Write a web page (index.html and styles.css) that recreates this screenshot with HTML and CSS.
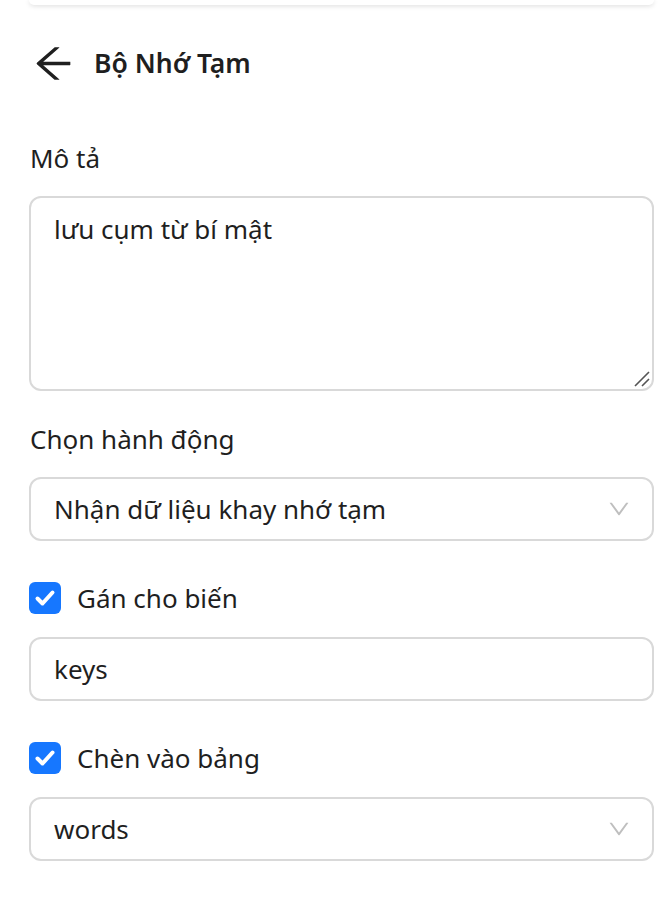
FILE: index.html
```html
<!DOCTYPE html>
<html lang="vi">
<head>
<meta charset="utf-8">
<link rel="stylesheet" href="styles.css">
</head>
<body>
<div class="page">
  <div class="topcard"></div>
  <div class="header">
    <svg class="back" viewBox="64 64 896 896" width="41" height="41"><path fill="currentColor" d="M872 474H286.9l350.2-304c5.6-4.9 2.2-14-5.2-14h-88.5c-3.9 0-7.6 1.4-10.5 3.9L155 487.8a31.960 31.960 0 000 48.3L535.1 866c1.5 1.3 3.3 2 5.2 2h91.5c7.4 0 10.8-9.2 5.2-14L286.9 550H872c4.4 0 8-3.6 8-8v-60c0-4.4-3.6-8-8-8z"/></svg>
    <span class="title">Bộ Nhớ Tạm</span>
  </div>

  <div class="label">Mô tả</div>
  <div class="field textarea">lưu cụm từ bí mật
    <svg class="grip" viewBox="0 0 16 16" width="16" height="16"><path d="M1 15L15 1M8 15L15 8" stroke="#555" stroke-width="1.6" fill="none"/></svg>
  </div>

  <div class="label label-gap">Chọn hành động</div>
  <div class="field select"><span>Nhận dữ liệu khay nhớ tạm</span>
    <svg class="chev" viewBox="64 64 896 896" width="22" height="22"><path fill="currentColor" d="M884 256h-75c-5.1 0-9.9 2.5-12.9 6.6L512 654.2 227.9 262.6c-3-4.1-7.8-6.6-12.9-6.6h-75c-6.5 0-10.3 7.4-6.5 12.7l352.6 486.1c12.8 17.6 39 17.6 51.7 0l352.6-486.1c3.9-5.3.1-12.7-6.4-12.7z"/></svg>
  </div>

  <div class="check-row">
    <span class="box"><svg viewBox="0 0 32 32" width="32" height="32"><path d="M8.5 16.5l5 5 10-11" stroke="#fff" stroke-width="4" fill="none" stroke-linecap="round" stroke-linejoin="round"/></svg></span>
    <span class="check-label">Gán cho biến</span>
  </div>
  <div class="field input">keys</div>

  <div class="check-row">
    <span class="box"><svg viewBox="0 0 32 32" width="32" height="32"><path d="M8.5 16.5l5 5 10-11" stroke="#fff" stroke-width="4" fill="none" stroke-linecap="round" stroke-linejoin="round"/></svg></span>
    <span class="check-label">Chèn vào bảng</span>
  </div>
  <div class="field select"><span>words</span>
    <svg class="chev" viewBox="64 64 896 896" width="22" height="22"><path fill="currentColor" d="M884 256h-75c-5.1 0-9.9 2.5-12.9 6.6L512 654.2 227.9 262.6c-3-4.1-7.8-6.6-12.9-6.6h-75c-6.5 0-10.3 7.4-6.5 12.7l352.6 486.1c12.8 17.6 39 17.6 51.7 0l352.6-486.1c3.9-5.3.1-12.7-6.4-12.7z"/></svg>
  </div>
</div>
</body>
</html>
```

FILE: styles.css
```css
* { box-sizing: border-box; }
html, body { margin: 0; padding: 0; background: #fff; }
body {
  font-family: "Noto Sans", "Open Sans", sans-serif;
  color: #1f1f1f;
  font-size: 26px;
}
.page {
  padding: 0 10px 0 29px;
  display: flex;
  flex-direction: column;
}
.topcard {
  height: 5px;
  background: #fff;
  border-radius: 0 0 6px 6px;
  box-shadow: 0 1px 5px rgba(0,0,0,0.14);
}
.header {
  display: flex;
  align-items: center;
  height: 52px;
  margin-top: 32px;
  margin-left: 4px;
}
.back { color: #1f1f1f; }
.title {
  margin-left: 20px;
  font-weight: 600;
  font-size: 26.5px;
}
.label {
  height: 44px;
  line-height: 44px;
  margin-top: 47px;
  margin-bottom: 16px;
  padding-left: 1px;
}
.label.label-gap { margin-top: 26px; }
.field {
  position: relative;
  border: 2px solid #d9d9d9;
  border-radius: 12px;
  padding: 0 23px;
  background: #fff;
}
.textarea {
  height: 195px;
  padding-top: 9px;
  line-height: 44px;
}
.grip { position: absolute; right: 2px; bottom: 2px; }
.select, .input {
  height: 64px;
  display: flex;
  align-items: center;
  justify-content: space-between;
}
.chev { color: #bfbfbf; margin-right: -1px; }
.check-row {
  display: flex;
  align-items: center;
  height: 44px;
  margin-top: 35px;
  margin-bottom: 17px;
}
.box {
  width: 32px;
  height: 32px;
  border-radius: 6px;
  background: #1677ff;
  display: flex;
}
.check-label { margin-left: 16px; }
```
